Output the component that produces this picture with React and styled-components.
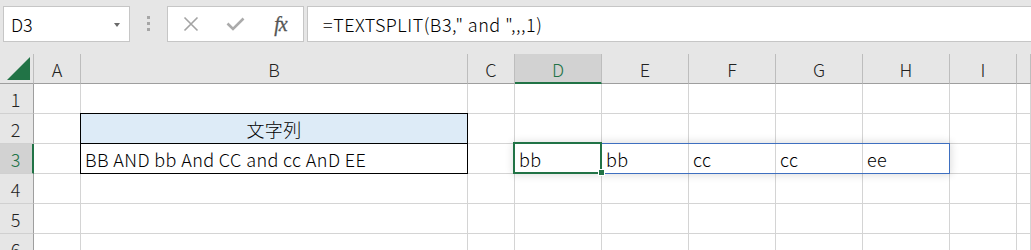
import React from "react";
import styled, { createGlobalStyle, css } from "styled-components";

const GREEN = "#217346";
const GRID = "#d4d4d4";
const FONT = `"Noto Sans CJK JP", "Noto Sans", sans-serif`;

const GlobalStyle = createGlobalStyle`
  html, body {
    margin: 0;
    padding: 0;
    background: #fff;
  }
  body {
    font-family: ${FONT};
    color: #000;
    overflow: hidden;
  }
`;

const Page = styled.div`
  width: 1031px;
  height: 250px;
  overflow: hidden;
  background: #e6e6e6;
`;

/* formula bar */
const TopBar = styled.div`
  display: flex;
  align-items: flex-start;
  height: 54px;
  padding: 6px 0 0 3px;
  box-sizing: border-box;
`;

const Box = styled.div`
  height: 36px;
  box-sizing: border-box;
  background: #fff;
  border: 1px solid #c6c6c6;
  display: flex;
  align-items: center;
`;

const NameBox = styled(Box)`
  width: 127px;
  padding: 0 9px 0 7px;
  justify-content: space-between;
  font-size: 18px;
  font-weight: 300;
`;

const Caret = styled.span`
  width: 0;
  height: 0;
  border-left: 3.5px solid transparent;
  border-right: 3.5px solid transparent;
  border-top: 4px solid #6a6a6a;
  margin-top: 1px;
`;

const Grip = styled.div`
  display: flex;
  flex-direction: column;
  gap: 3px;
  margin: 10px 17px 0 17px;
`;

const GripDot = styled.span`
  width: 3px;
  height: 3px;
  background: #a6a6a6;
`;

const IconBox = styled(Box)`
  width: 137px;
`;

const IconSlot = styled.div`
  width: 45px;
  display: flex;
  justify-content: center;
  align-items: center;
`;

const Fx = styled.span`
  font-family: "Liberation Serif", serif;
  font-style: italic;
  font-size: 20px;
  color: #555;
  letter-spacing: -1px;
  -webkit-text-stroke: 0.3px #555;
`;

const FormulaBox = styled(Box)`
  flex: 1;
  margin-left: 3px;
  border-right: none;
  padding-left: 15px;
  font-size: 18px;
  font-weight: 300;
  letter-spacing: 0.5px;
  white-space: pre;
`;

/* sheet grid */
const Sheet = styled.div`
  display: grid;
  grid-template-columns: 34px 47px 387px 47px 87px 87px 87px 87px 87px 67px 1fr;
  grid-auto-rows: 30px;
  font-size: 18px;
  font-weight: 300;
`;

const Corner = styled.div`
  border-right: 1px solid #bdbdbd;
  border-bottom: 1px solid #9e9e9e;
  display: flex;
  align-items: flex-end;
  justify-content: flex-end;
  padding: 0 3px 3px 0;
`;

const ColHead = styled.div`
  box-sizing: border-box;
  display: flex;
  align-items: center;
  justify-content: center;
  color: #222;
  border-right: 1px solid #bdbdbd;
  border-bottom: 1px solid #9e9e9e;
  ${(p) =>
    p.$active &&
    css`
      background: #d2d2d2;
      color: ${GREEN};
      border-bottom: 2px solid ${GREEN};
      padding-top: 1px;
    `}
`;

const RowHead = styled.div`
  box-sizing: border-box;
  display: flex;
  align-items: center;
  justify-content: center;
  padding-right: 2px;
  color: #222;
  background: #e6e6e6;
  border-right: 1px solid #9e9e9e;
  border-bottom: 1px solid #d0d0d0;
  ${(p) =>
    p.$active &&
    css`
      background: #d2d2d2;
      color: ${GREEN};
      border-right: 2px solid ${GREEN};
      padding-right: 1px;
    `}
`;

const Cell = styled.div`
  box-sizing: border-box;
  display: flex;
  align-items: center;
  justify-content: ${(p) => (p.$center ? "center" : "flex-start")};
  padding: 0 4px;
  letter-spacing: 0.4px;
  background: ${(p) => p.$fill || "#fff"};
  border-right: 1px solid ${(p) => (p.$boxed ? "#000" : GRID)};
  border-bottom: 1px solid ${(p) => (p.$boxed ? "#000" : GRID)};
  white-space: nowrap;
  ${(p) =>
    p.$boxed &&
    css`
      box-shadow: -1px -1px 0 #000, -1px 0 0 #000, 0 -1px 0 #000;
    `}
  ${(p) =>
    p.$anchor &&
    css`
      position: relative;
    `}
`;

const SpillFrame = styled.div`
  position: absolute;
  z-index: 2;
  top: -1px;
  left: -1px;
  width: 436px;
  height: 31px;
  box-sizing: border-box;
  border: 1px solid #3e6fc0;
  box-shadow: 0 0 8px 1px rgba(0, 0, 0, 0.14);
  pointer-events: none;
`;

const SelectFrame = styled.div`
  position: absolute;
  z-index: 3;
  top: -2px;
  left: -2px;
  width: 89px;
  height: 32px;
  box-sizing: border-box;
  border: 2px solid ${GREEN};
  pointer-events: none;
`;

const FillHandle = styled.span`
  position: absolute;
  right: -5px;
  bottom: -4px;
  width: 5px;
  height: 5px;
  background: ${GREEN};
  border: 1px solid #fff;
`;

const columns = ["A", "B", "C", "D", "E", "F", "G", "H", "I", ""];

const data = {
  2: { B: { text: "文字列", fill: "#ddebf7", center: true, boxed: true } },
  3: {
    B: { text: "BB AND bb And CC and cc AnD EE", boxed: true },
    D: { text: "bb", selected: true },
    E: { text: "bb" },
    F: { text: "cc" },
    G: { text: "cc" },
    H: { text: "ee" },
  },
};

function CloseIcon() {
  return (
    <svg width="16" height="16" viewBox="0 0 16 16">
      <path d="M1.5 1.5 L14.5 14.5 M14.5 1.5 L1.5 14.5" stroke="#a3a3a3" strokeWidth="1.6" fill="none" />
    </svg>
  );
}

function CheckIcon() {
  return (
    <svg width="19" height="14" viewBox="0 0 19 14">
      <path d="M1.5 6.5 L7 12 L17.5 1.5" stroke="#ababab" strokeWidth="2.6" fill="none" />
    </svg>
  );
}

function CornerMark() {
  return (
    <svg width="23" height="23" viewBox="0 0 23 23">
      <polygon points="0,23 23,0 23,23" fill={GREEN} />
    </svg>
  );
}

export default function App() {
  return (
    <Page>
      <GlobalStyle />
      <TopBar>
        <NameBox>
          <span>D3</span>
          <Caret />
        </NameBox>
        <Grip>
          <GripDot />
          <GripDot />
          <GripDot />
        </Grip>
        <IconBox>
          <IconSlot>
            <CloseIcon />
          </IconSlot>
          <IconSlot>
            <CheckIcon />
          </IconSlot>
          <IconSlot>
            <Fx>fx</Fx>
          </IconSlot>
        </IconBox>
        <FormulaBox>=TEXTSPLIT(B3," and ",,,1)</FormulaBox>
      </TopBar>

      <Sheet>
        <Corner>
          <CornerMark />
        </Corner>
        {columns.map((c, i) => (
          <ColHead key={i} $active={c === "D"}>
            {c}
          </ColHead>
        ))}

        {[1, 2, 3, 4, 5, 6].map((r) => (
          <React.Fragment key={r}>
            <RowHead $active={r === 3}>{r}</RowHead>
            {columns.map((c, i) => {
              const d = (data[r] && data[r][c]) || {};
              return (
                <Cell
                  key={i}
                  $fill={d.fill}
                  $center={d.center}
                  $boxed={d.boxed}
                  $anchor={d.selected}
                >
                  {d.text}
                  {d.selected && (
                    <>
                      <SpillFrame />
                      <SelectFrame>
                        <FillHandle />
                      </SelectFrame>
                    </>
                  )}
                </Cell>
              );
            })}
          </React.Fragment>
        ))}
      </Sheet>
    </Page>
  );
}
